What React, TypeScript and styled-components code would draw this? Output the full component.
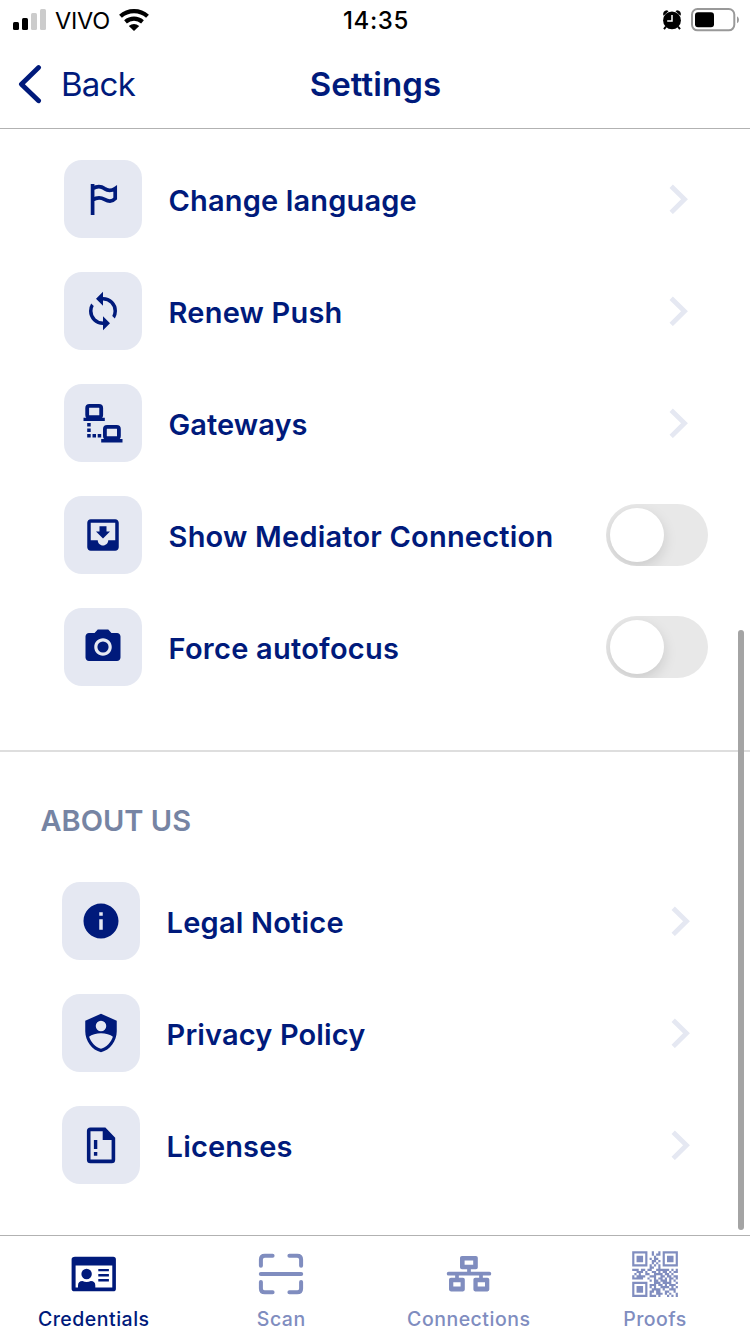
import React from 'react';
import styled, { createGlobalStyle } from 'styled-components';

const NAVY = '#001a7b';
const MUTED = '#808dbf';
const TILE = '#e5e8f2';

const GlobalStyle = createGlobalStyle`
  * { box-sizing: border-box; }
  body { margin: 0; background: #fff; }
`;

const Screen = styled.div`
  position: relative;
  width: 750px;
  height: 1334px;
  overflow: hidden;
  display: flex;
  flex-direction: column;
  background: #fff;
  color: ${NAVY};
  font-family: Inter, 'Liberation Sans', sans-serif;
`;

const StatusBar = styled.div`
  height: 40px;
  flex: none;
  display: grid;
  grid-template-columns: 1fr auto 1fr;
  align-items: center;
  padding: 0 11px 0 13px;
  color: #000;
`;

const StatusGroup = styled.div<{ $end?: boolean }>`
  display: flex;
  align-items: center;
  justify-content: ${(p) => (p.$end ? 'flex-end' : 'flex-start')};
  gap: 9px;
`;

const Carrier = styled.span`
  padding-top: 1px;
  font-size: 23.5px;
  line-height: 39px;
  letter-spacing: -0.2px;
`;

const Clock = styled.span`
  padding-top: 2px;
  font-size: 24px;
  font-weight: 500;
  line-height: 38px;
  letter-spacing: 0.6px;
`;

const Header = styled.header`
  height: 89px;
  flex: none;
  display: grid;
  grid-template-columns: 1fr auto 1fr;
  align-items: center;
  padding: 0 18px;
  border-bottom: 1px solid #b2b2b2;
`;

const BackButton = styled.button`
  display: flex;
  align-items: center;
  gap: 18px;
  padding: 0;
  border: 0;
  background: none;
  color: inherit;
  font: 400 33px/40px Inter, sans-serif;
  letter-spacing: -0.75px;
`;

const Title = styled.h1`
  margin: 0;
  padding-left: 1px;
  font-size: 33px;
  line-height: 40px;
  font-weight: 600;
  letter-spacing: 0.1px;
`;

const Content = styled.main`
  height: 1106px;
  flex: none;
  overflow: hidden;
`;

const Section = styled.section<{ $inset: number; $end: number }>`
  display: flex;
  flex-direction: column;
  gap: 34px;
  padding: 0 ${(p) => p.$end}px 0 ${(p) => p.$inset}px;
`;

const Preferences = styled.div`
  padding: 31px 0 64px;
  border-bottom: 2px solid #dedede;
`;

const SectionTitle = styled.h2`
  margin: 49px 0 41px 40.5px;
  font-size: 29px;
  line-height: 40px;
  font-weight: 600;
  letter-spacing: 0;
  color: #7684a3;
`;

const Row = styled.div`
  height: 78px;
  display: flex;
  align-items: center;
`;

const Tile = styled.div`
  width: 78px;
  height: 78px;
  border-radius: 18px;
  background: ${TILE};
  flex: none;
`;

const RowLabel = styled.span<{ $spacing?: number }>`
  flex: 1;
  margin: 3px 0 0 26.6px;
  font-size: 29px;
  line-height: 40px;
  font-weight: 600;
  letter-spacing: ${(p) => p.$spacing ?? 0}px;
  white-space: nowrap;
`;

const Toggle = styled.div`
  width: 102px;
  height: 62px;
  padding: 4px;
  border-radius: 31px;
  background: #e8e8e8;
  overflow: hidden;
  flex: none;
`;

const Knob = styled.div`
  width: 54px;
  height: 54px;
  border-radius: 50%;
  background: #fff;
  box-shadow: 0 5px 14px rgba(0, 0, 0, 0.13);
`;

const ScrollThumb = styled.div`
  position: absolute;
  left: 738px;
  top: 630px;
  width: 6px;
  height: 600px;
  border-radius: 3px;
  background: #a4a4a4;
`;

const TabBar = styled.nav`
  flex: 1;
  display: grid;
  grid-template-columns: repeat(4, 1fr);
  border-top: 1px solid #b2b2b2;
`;

const Tab = styled.div<{ $active?: boolean }>`
  display: flex;
  flex-direction: column;
  align-items: center;
  padding-top: 14px;
  color: ${(p) => (p.$active ? NAVY : MUTED)};

  &:last-child {
    padding-right: 2.5px;
  }
`;

const TabLabel = styled.span`
  margin-top: 9px;
  font-size: 19.5px;
  line-height: 24px;
  font-weight: 500;
  letter-spacing: 0.5px;
`;

const TileIcon = ({ children }: { children: React.ReactNode }) => (
  <Tile>
    <svg width="78" height="78" viewBox="0 0 78 78" fill={NAVY}>{children}</svg>
  </Tile>
);

/* 24-unit glyphs are drawn at 42px in the middle of the tile. */
const Glyph = ({ d }: { d: string }) => (
  <path transform="translate(18 18) scale(1.75)" fillRule="evenodd" d={d} />
);

const Chevron = () => (
  <svg width="20" height="30" viewBox="0 0 20 30" fill="none" stroke={TILE} strokeWidth="4.8">
    <path d="M2.2 2.2 L15.5 15.3 L2.2 28.4" />
  </svg>
);

const flag = (
  <path
    d="M28.6 24 V55 M28.6 28.6 C33 26 37 26 40.5 28.6 C44 31 48 30.6 51.2 28.4 V38.6 C48 42.2 44 41.4 40.5 39.4 C37 37.4 33 37.2 28.6 39.9"
    fill="none" stroke={NAVY} strokeWidth="3.7"
  />
);

const gateways = (
  <>
    <g fill="none" stroke={NAVY} strokeWidth="3.8">
      <rect x="23.2" y="21.9" width="14" height="11.2" rx="2.2" />
      <rect x="40.9" y="42.9" width="14" height="11.2" rx="2.2" />
    </g>
    <path d="M19.5 33.7h21.3v3.4H19.5z M37.2 55h21.3v3.4H37.2z M23.2 39h3.5v3.4h-3.5z M23.2 44.6h3.5v3.4h-3.5z M23.2 50h3.5v3.4h-3.5z M28.5 50h3.5v3.4h-3.5z M33.7 50h3.5v3.4h-3.5z" />
  </>
);

const inbox = <Glyph d="M19 3H4.99c-1.11 0-1.98.9-1.98 2L3 19c0 1.1.88 2 1.99 2H19c1.1 0 2-.9 2-2V5c0-1.1-.9-2-2-2zm0 12h-4c0 1.66-1.35 3-3 3s-3-1.34-3-3H4.99V5H19v10zm-3-5h-2V7h-4v3H8l4 4 4-4z" />;
const sync = <Glyph d="M12 18A6 6 0 0 1 6 12C6 11 6.25 10.03 6.7 9.2L5.24 7.74A7.93 7.93 0 0 0 4 12A8 8 0 0 0 12 20V23L16 19L12 15M12 4V1L8 5L12 9V6A6 6 0 0 1 18 12C18 13 17.75 13.97 17.3 14.8L18.76 16.26A7.93 7.93 0 0 0 20 12A8 8 0 0 0 12 4" />;
const camera = <Glyph d="M9 2L7.17 4H4c-1.1 0-2 .9-2 2v12c0 1.1.9 2 2 2h16c1.1 0 2-.9 2-2V6c0-1.1-.9-2-2-2h-3.17L15 2H9zm3 15c-2.76 0-5-2.24-5-5s2.24-5 5-5 5 2.24 5 5-2.24 5-5 5zM12 8.8a3.2 3.2 0 1 0 0 6.4a3.2 3.2 0 0 0 0-6.4z" />;
const info = <Glyph d="M12 2C6.48 2 2 6.48 2 12s4.48 10 10 10 10-4.48 10-10S17.52 2 12 2zm1 15h-2v-6h2v6zm0-8h-2V7h2v2z" />;
const shield = <Glyph d="M12 1L3 5v6c0 5.55 3.84 10.74 9 12 5.16-1.26 9-6.45 9-12V5l-9-4zm0 4a3 3 0 1 1 0 6a3 3 0 0 1 0-6zm0 16c-3.3-1-5.7-3.8-6.8-6.9C6.6 12.9 9.4 12.2 12 12.2s5.4.7 6.8 1.9C17.7 17.2 15.3 20 12 21z" />;
const license = (
  <>
    <path d="M28.5 23.4H42.6L51.4 32.5V53.7Q51.4 55.4 49.7 55.4H28.4Q26.7 55.4 26.7 53.7V25.1Q26.7 23.4 28.5 23.4z" fill="none" stroke={NAVY} strokeWidth="3.6" />
    <path d="M40.7 22v12h12l-1-2L43 23z M31.9 34h3.4v9H31.9z M31.9 46h3.4v3.8H31.9z" />
  </>
);

const preferences = [
  { label: 'Change language', icon: flag, spacing: 0.15 },
  { label: 'Renew Push', icon: sync, spacing: 0.2 },
  { label: 'Gateways', icon: gateways, spacing: 0.05 },
  { label: 'Show Mediator Connection', icon: inbox, spacing: 0.2, toggle: true },
  { label: 'Force autofocus', icon: camera, spacing: 0.25, toggle: true },
];

const about = [
  { label: 'Legal Notice', icon: info, spacing: 0.2 },
  { label: 'Privacy Policy', icon: shield, spacing: 0.13 },
  { label: 'Licenses', icon: license, spacing: 0.15 },
];

const SettingsRow = ({ label, icon, spacing, toggle }: { label: string; icon: React.ReactNode; spacing: number; toggle?: boolean }) => (
  <Row>
    <TileIcon>{icon}</TileIcon>
    <RowLabel $spacing={spacing}>{label}</RowLabel>
    {toggle ? <Toggle><Knob /></Toggle> : <ChevronSlot><Chevron /></ChevronSlot>}
  </Row>
);

const ChevronSlot = styled.div`
  display: flex;
  padding-right: 19px;
`;

const QR = [
  '111111100100101111111',
  '100000100101101000001',
  '101110100010001011101',
  '101110101011001011101',
  '101110100110101011101',
  '100000100101001000001',
  '111111101010101111111',
  '000000001100100000000',
  '111011011001111110101',
  '001110100110101101011',
  '010100110011110110100',
  '101111001110011011011',
  '111110010010110101101',
  '000000001011011101010',
  '111111100011101111001',
  '100000101110110101110',
  '101110101010011110101',
  '101110100111101001110',
  '101110101101100110010',
  '100000101001110101001',
  '111111101110100010101',
];

const credentialsIcon = (
  <>
    <path fillRule="evenodd" d="M5 6.7H43.2Q45.9 6.7 45.9 9.3V38.7Q45.9 41.3 43.2 41.3H4.6Q1.6 41.3 1.6 38.7V9.3Q1.6 6.7 5 6.7z M5.6 15.4V37.4H42.3V15.4z" />
    <circle cx="16.6" cy="24" r="5.2" />
    <path d="M8 38V35.5Q8 31 12.5 31Q16.6 33 20.8 31Q25.3 31 25.3 35.5V38z M28.3 19h10.6v2.3H28.3z M28.3 24h10.6v2.5H28.3z M28.3 29h10.6v2.4H28.3z" />
  </>
);
const scanIcon = (
  <path
    d="M3.9 15.8V9.6Q3.9 5.7 7.8 5.7H15.6 M32.4 5.7H40.2Q44.1 5.7 44.1 9.6V15.8 M3.9 32V38.4Q3.9 42.3 7.8 42.3H15.6 M32.4 42.3H40.2Q44.1 42.3 44.1 38.4V32 M3.8 24H44.2"
    fill="none" stroke="currentColor" strokeWidth="4" strokeLinecap="round"
  />
);
const connectionsIcon = (
  <>
    <path fillRule="evenodd" d="M17 6H30.9Q32.8 6 32.8 7.8V17.4Q32.8 19.2 30.9 19.2H17Q15 19.2 15 17.4V7.8Q15 6 17 6z M19.6 10.4V14.7H28.2V10.4z M6 27.8H18Q19.8 27.8 19.8 29.6V39.6Q19.8 41.4 18 41.4H6Q4 41.4 4 39.6V29.6Q4 27.8 6 27.8z M8.3 32.3V36.6H15.6V32.3z M30.2 27.8H42.4Q44.3 27.8 44.3 29.6V39.6Q44.3 41.4 42.4 41.4H30.2Q28.4 41.4 28.4 39.6V29.6Q28.4 27.8 30.2 27.8z M32.7 32.3V36.6H40V32.3z" />
    <path d="M24 18v5.5 M12 24v5 M36 24v5 M3.6 23.7H44.4" fill="none" stroke="currentColor" strokeWidth="3.7" strokeLinecap="round" />
  </>
);
const proofsIcon = (
  <path
    transform="translate(1.2 1.3) scale(2.175)"
    d={QR.map((row, y) => [...row].map((c, x) => (c === '1' ? `M${x} ${y}h1v1h-1z` : '')).join('')).join('')}
  />
);

const tabs = [
  { label: 'Credentials', icon: credentialsIcon, active: true },
  { label: 'Scan', icon: scanIcon },
  { label: 'Connections', icon: connectionsIcon },
  { label: 'Proofs', icon: proofsIcon },
];

export default function App() {
  return (
    <Screen>
      <GlobalStyle />
      <StatusBar>
        <StatusGroup>
          <svg width="33" height="22" viewBox="0 0 33 22">
            <rect x="0" y="13" width="6" height="8" rx="1.5" />
            <rect x="9" y="9" width="6" height="12" rx="1.5" />
            <rect x="18" y="4" width="6" height="17" rx="1.5" fill="#ccc" />
            <rect x="27" y="0" width="6" height="21" rx="1.5" fill="#ccc" />
          </svg>
          <Carrier>VIVO</Carrier>
          <svg width="30" height="22" viewBox="0 0 30 22" fill="none" stroke="#000" strokeWidth="4.2">
            <path d="M1.5 7.2C9 .4 21 .4 28.5 7.2" />
            <path d="M6.5 12.8C11.5 8.6 18.5 8.6 23.5 12.8" />
            <path d="M9.8 17Q15 13 20.2 17L15 22z" fill="#000" stroke="none" />
          </svg>
        </StatusGroup>
        <Clock>14:35</Clock>
        <StatusGroup $end>
          <svg width="20" height="20" viewBox="0 0 20 20">
            <circle cx="10" cy="10.4" r="8.9" />
            <path d="M1.2 5.2Q.6 1 5 .3L6.5 1.2L1.8 5.4z M18.8 5.2Q19.4 1 15 .3L13.5 1.2L18.2 5.4z" />
            <path d="M4 16.5L2 19.2 M16 16.5L18 19.2" stroke="#000" strokeWidth="2" />
            <path d="M10 5V11H5.2" fill="none" stroke="#fff" strokeWidth="1.5" />
          </svg>
          <svg width="48" height="24" viewBox="0 0 48 24">
            <rect x="1" y="1" width="42.3" height="21.3" rx="5.5" fill="none" stroke="#999" strokeWidth="2" />
            <rect x="4" y="4.2" width="19" height="15" rx="3" />
            <path d="M46 8.2Q48 9.2 48 11.7T46 15.2z" fill="#999" />
          </svg>
        </StatusGroup>
      </StatusBar>
      <Header>
        <BackButton>
          <svg width="25" height="40" viewBox="0 0 25 40" fill="none" stroke={NAVY} strokeWidth="4.8" strokeLinecap="round" strokeLinejoin="round">
            <path d="M20.6 3.6L3.4 20.2L20.6 36.8" />
          </svg>
          Back
        </BackButton>
        <Title>Settings</Title>
      </Header>
      <Content>
        <Preferences>
          <Section $inset={64} $end={42}>
            {preferences.map((item) => <SettingsRow key={item.label} {...item} />)}
          </Section>
        </Preferences>
        <SectionTitle>ABOUT US</SectionTitle>
        <Section $inset={62} $end={40}>
          {about.map((item) => <SettingsRow key={item.label} {...item} />)}
        </Section>
      </Content>
      <TabBar>
        {tabs.map((tab) => (
          <Tab key={tab.label} $active={tab.active}>
            <svg width="48" height="48" viewBox="0 0 48 48" fill="currentColor">{tab.icon}</svg>
            <TabLabel>{tab.label}</TabLabel>
          </Tab>
        ))}
      </TabBar>
      <ScrollThumb />
    </Screen>
  );
}
